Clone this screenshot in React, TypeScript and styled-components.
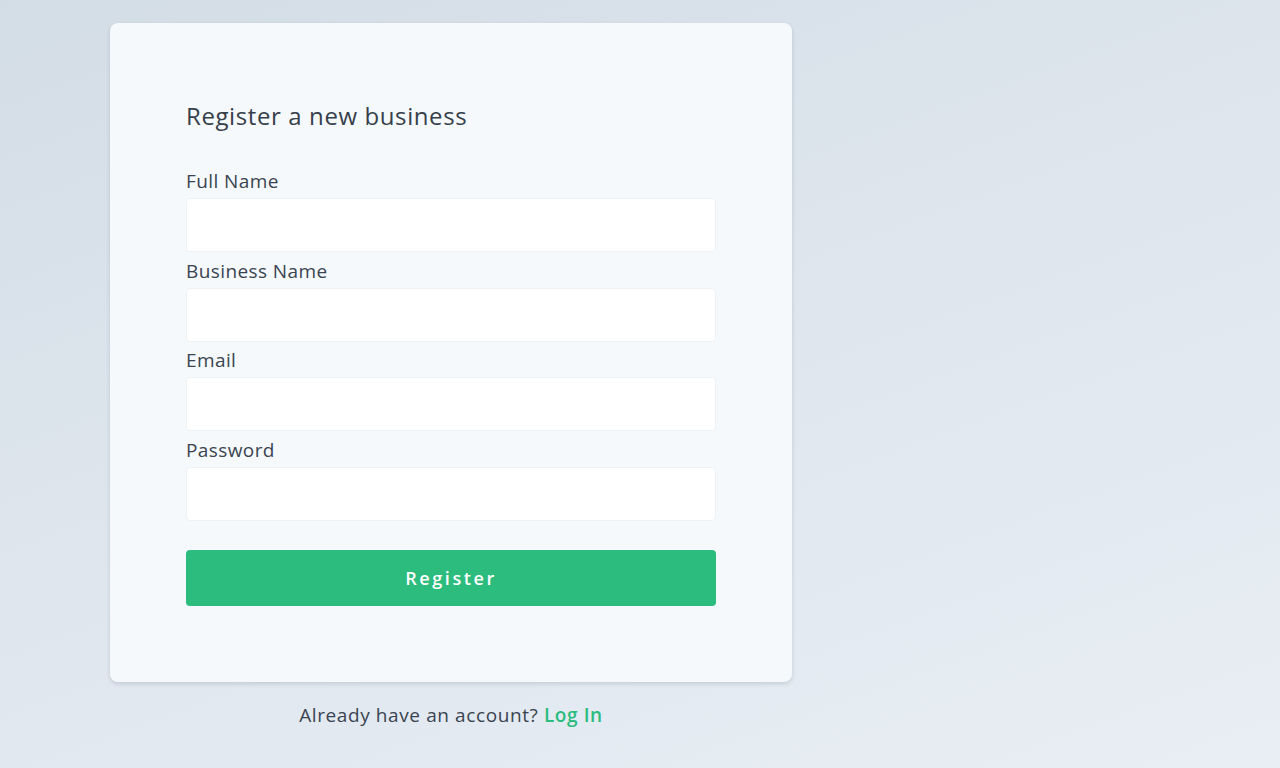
import React from "react";
import styled, { createGlobalStyle } from "styled-components";

const GlobalStyle = createGlobalStyle`
  * { box-sizing: border-box; }
  html, body { margin: 0; padding: 0; }
  body {
    font-family: "Open Sans", "Noto Sans", sans-serif;
    color: #3a4450;
  }
`;

const fields = [
    { id: "fullName", label: "Full Name", type: "text" },
    { id: "businessName", label: "Business Name", type: "text" },
    { id: "email", label: "Email", type: "email" },
    { id: "password", label: "Password", type: "password" },
];

const App = () => {
    return (
        <>
            <GlobalStyle />
            <Page>
                <Column>
                    <Card>
                        <Title>Register a new business</Title>
                        <Form onSubmit={(e) => e.preventDefault()}>
                            {fields.map((f) => (
                                <Field key={f.id}>
                                    <Label htmlFor={f.id}>{f.label}</Label>
                                    <Input id={f.id} type={f.type} />
                                </Field>
                            ))}
                            <SubmitButton type="submit">Register</SubmitButton>
                        </Form>
                    </Card>
                    <Footer>
                        Already have an account? <LoginLink href="#">Log In</LoginLink>
                    </Footer>
                </Column>
            </Page>
        </>
    );
};

export default App;

const Page = styled.div`
min-height: 100vh;
padding: 23px 0 0 110px;
background: linear-gradient(160deg, #d3dde6 0%, #dfe6ee 50%, #e8eef4 100%);
`;

const Column = styled.div`
display: flex;
flex-direction: column;
align-items: center;
width: 682px;
`;

const Card = styled.div`
width: 100%;
padding: 76px 76px 76px;
border-radius: 8px;
background: #f5f9fc;
box-shadow: 0 2px 4px rgba(60, 80, 100, 0.18);
`;

const Title = styled.h1`
margin: 0 0 35px;
font-size: 24px;
font-weight: 400;
letter-spacing: 0.6px;
line-height: 34px;
color: #36404b;
`;

const Form = styled.form`
display: flex;
flex-direction: column;
`;

const Field = styled.div`
display: flex;
flex-direction: column;
margin-bottom: 5.6px;
`;

const Label = styled.label`
font-size: 19px;
letter-spacing: 0.4px;
line-height: 27px;
color: #3a4450;
margin-bottom: 3px;
`;

const Input = styled.input`
height: 54px;
width: 100%;
border: 1px solid #eef2f5;
border-radius: 4px;
background: #ffffff;
padding: 0 14px;
font-family: inherit;
font-size: 16px;
outline: none;
`;

const SubmitButton = styled.button`
margin-top: 24px;
height: 56px;
width: 100%;
border: none;
border-radius: 4px;
background: #2bbc7e;
color: #ffffff;
font-family: inherit;
font-size: 18px;
font-weight: 600;
letter-spacing: 2.6px;
cursor: pointer;
`;

const Footer = styled.p`
margin: 20px 0 0;
font-size: 19px;
letter-spacing: 0.6px;
line-height: 27px;
color: #3a4450;
`;

const LoginLink = styled.a`
color: #2bbc7e;
font-weight: 600;
text-decoration: none;
`;
